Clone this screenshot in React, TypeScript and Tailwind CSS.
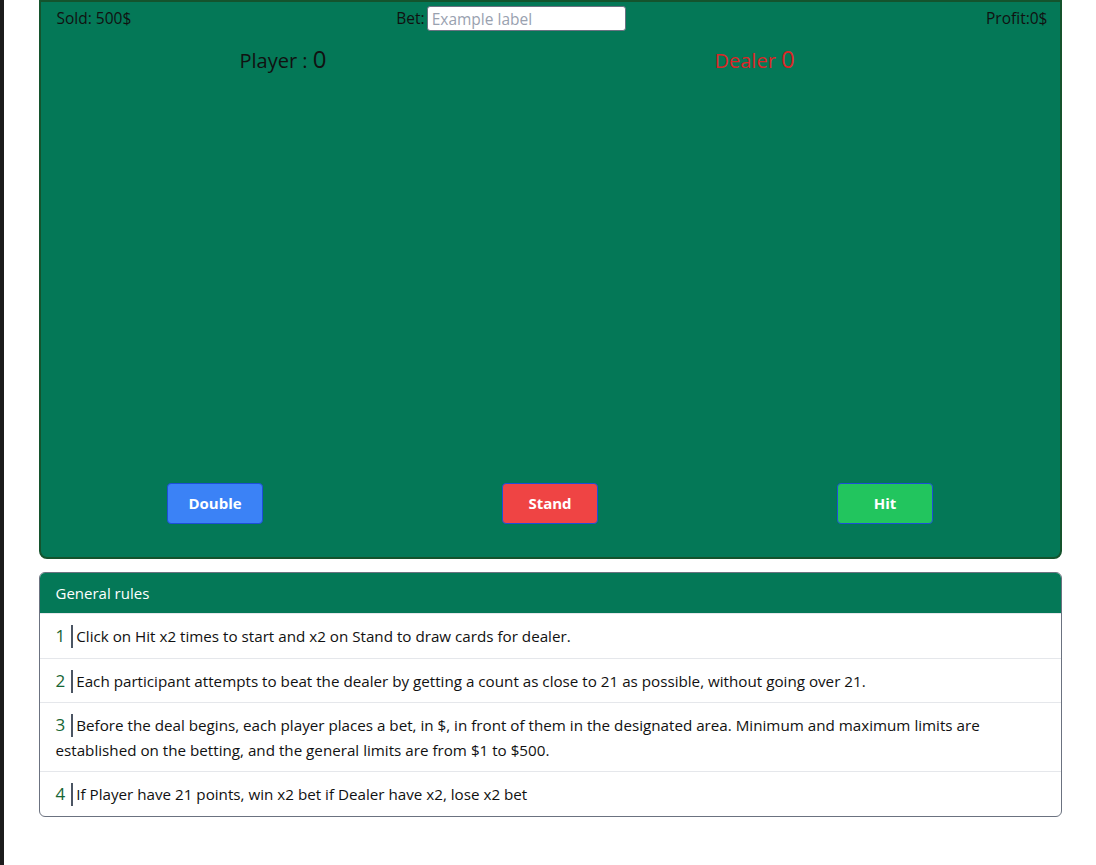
const rules = [
  "Click on Hit x2 times to start and x2 on Stand to draw cards for dealer.",
  "Each participant attempts to beat the dealer by getting a count as close to 21 as possible, without going over 21.",
  "Before the deal begins, each player places a bet, in $, in front of them in the designated area. Minimum and maximum limits are established on the betting, and the general limits are from $1 to $500.",
  "If Player have 21 points, win x2 bet if Dealer have x2, lose x2 bet",
]

export default function App() {
  return (
    <div className="flex min-h-[865px] bg-white font-['Open_Sans',sans-serif] text-[#111]">
      {/* side strip from the neighbouring window */}
      <div className="w-[4px] shrink-0 bg-[#1c1c1c]" />

      <div className="flex-1">
        <div className="mx-auto w-[1023px]">
          {/* Table */}
          <div className="h-[559px] rounded-b-lg border-2 border-[#14532d] bg-[#047857] flex flex-col">
            <div className="flex items-center justify-between h-[33px] pl-[16px] pr-[12px] text-[15.5px]">
              <span className="w-[300px]">Sold: 500$</span>
              <div className="flex items-center gap-[2px] -ml-[82px]">
                <span>Bet:</span>
                <input
                  className="w-[199px] h-[25px] rounded-[3px] border border-gray-500 bg-white px-[4px] text-[15.5px] placeholder:text-gray-400 outline-none"
                  placeholder="Example label"
                />
              </div>
              <span className="w-[300px] text-right">Profit:0$</span>
            </div>

            <div className="flex items-baseline h-[46px] pt-[6px] text-[20px]">
              <span className="ml-[199px] w-[475px]">
                Player : <span className="text-[24px]">0</span>
              </span>
              <span className="text-[#dc2626]">
                Dealer <span className="text-[24px]">0</span>
              </span>
            </div>

            <div className="flex-1" />

            <div className="flex justify-around px-[7px] pb-[33px]">
              <button className="w-[96px] h-[41px] rounded-[4px] border border-[#1d4ed8] bg-[#3b82f6] text-white font-bold text-[15px]">
                Double
              </button>
              <button className="w-[96px] h-[41px] rounded-[4px] border border-[#1d4ed8] bg-[#ef4444] text-white font-bold text-[15px]">
                Stand
              </button>
              <button className="w-[96px] h-[41px] rounded-[4px] border border-[#1d4ed8] bg-[#22c55e] text-white font-bold text-[15px]">
                Hit
              </button>
            </div>
          </div>

          {/* Rules */}
          <div className="mt-[13px] rounded-md border border-[#6b7280] overflow-hidden text-[15.2px]">
            <div className="h-[40px] flex items-center px-4 bg-[#047857] text-white text-[15px]">General rules</div>
            {rules.map((r, i) => (
              <div
                key={i}
                className="px-4 pt-[10px] pb-[9px] leading-[24.5px] border-t border-[#e5e7eb] first:border-t-0 first:pb-[10px]"
              >
                <span className="text-[17px] leading-[0] text-[#166534]">{i + 1}</span>
                <span className="inline-block align-[-3px] w-[2px] h-[23px] -my-[3px] bg-[#4b5563] ml-[6px] mr-[3px]" />
                {r}
              </div>
            ))}
          </div>
        </div>
      </div>
    </div>
  )
}
